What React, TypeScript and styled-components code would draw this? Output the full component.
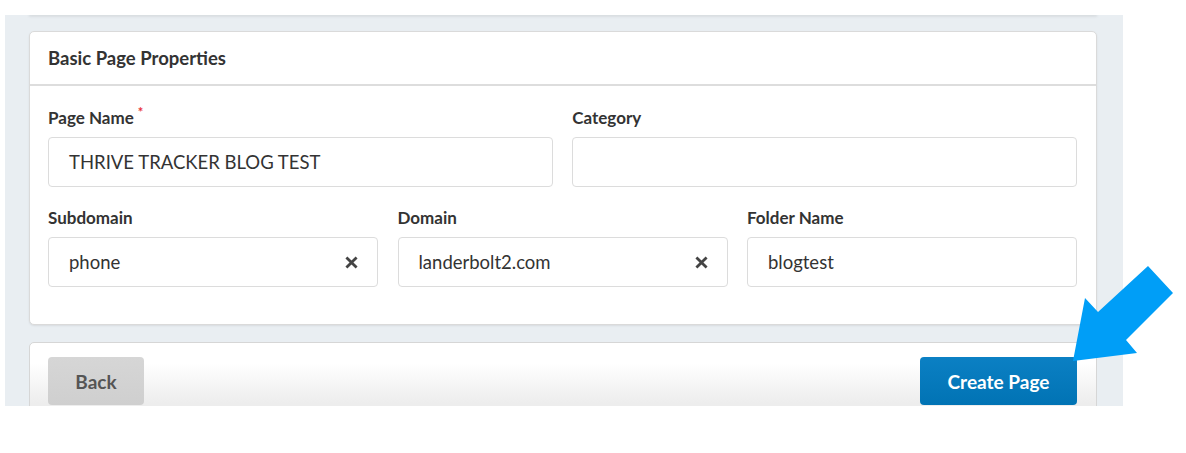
import React from 'react';
import styled, { createGlobalStyle } from 'styled-components';

const GlobalStyle = createGlobalStyle`
  html, body {
    margin: 0;
    padding: 0;
    background: #fff;
  }
  body {
    font-family: Lato, "Open Sans", sans-serif;
    color: #333;
  }
`;

const Page = styled.div`
  position: relative;
  width: 1186px;
  height: 453px;
  overflow: hidden;
`;

const Frame = styled.div`
  margin: 15px 0 0 5px;
  width: 1118px;
  height: 391px;
  box-sizing: border-box;
  padding: 0 26px 0 24px;
  background: #e9eef2;
  overflow: hidden;
`;

const PrevCardEdge = styled.div`
  height: 1px;
  margin-top: -1px;
  background: #fff;
  box-shadow: 0 1px 3px rgba(0, 0, 0, 0.22);
`;

const Card = styled.section`
  margin-top: 16px;
  background: #fff;
  border: 1px solid #dadada;
  border-radius: 5px;
  box-shadow: 0 1px 2px rgba(0, 0, 0, 0.08);
`;

const CardHeader = styled.header`
  display: flex;
  align-items: center;
  height: 51px;
  padding: 0 18px 1px;
  border-bottom: 2px solid #dddddd;
  font-size: 18.5px;
  font-weight: 700;
  color: #333;
`;

const CardBody = styled.div`
  display: flex;
  flex-direction: column;
  gap: 21px;
  padding: 22px 19px 37px 18px;
`;

const FieldRow = styled.div<{ $cols: number }>`
  display: grid;
  grid-template-columns: repeat(${(p) => p.$cols}, 1fr);
  column-gap: 19.5px;
`;

const Field = styled.div`
  display: flex;
  flex-direction: column;
  gap: 9px;
`;

const Label = styled.label`
  display: flex;
  align-items: flex-start;
  height: 20px;
  line-height: 20px;
  font-size: 17px;
  font-weight: 700;
  color: #333;
`;

const Required = styled.span`
  color: #e8333a;
  font-size: 13px;
  line-height: 10px;
  margin-left: 4px;
  margin-top: -1px;
`;

const InputBox = styled.div`
  display: flex;
  align-items: center;
  height: 50px;
  box-sizing: border-box;
  padding: 0 19px 0 20px;
  border: 1px solid #dcdcdc;
  border-radius: 4px;
  background: #fff;
  font-size: 18.5px;
  color: #333;
`;

const InputValue = styled.span`
  flex: 1;
  white-space: nowrap;
`;

const ClearIcon = styled.svg`
  width: 13px;
  height: 13px;
  fill: #444;
`;

const Footer = styled.div`
  display: flex;
  justify-content: space-between;
  align-items: flex-start;
  margin-top: 17px;
  height: 120px;
  padding: 14px 19px 0 18px;
  background: linear-gradient(#ffffff 0%, #ffffff 15%, #ededed 60px);
  border: 1px solid #d6d6d6;
  border-radius: 5px;
`;

const Button = styled.button<{ $primary?: boolean }>`
  height: 48px;
  padding: 0;
  width: ${(p) => (p.$primary ? '157px' : '96px')};
  border: none;
  border-radius: 4px;
  font-family: Lato, "Open Sans", sans-serif;
  font-size: 19px;
  font-weight: 700;
  cursor: pointer;
  color: ${(p) => (p.$primary ? '#fff' : '#555')};
  background: ${(p) =>
    p.$primary
      ? 'linear-gradient(#0b80c4, #0173b4)'
      : 'linear-gradient(#d6d6d6, #cfcfcf)'};
`;

const Annotation = styled.svg`
  position: absolute;
  left: 0;
  top: 0;
  pointer-events: none;
`;

const Clear = () => (
  <ClearIcon viewBox="0 0 12 12">
    <path d="M2.2 0.4 L6 4.2 L9.8 0.4 L11.6 2.2 L7.8 6 L11.6 9.8 L9.8 11.6 L6 7.8 L2.2 11.6 L0.4 9.8 L4.2 6 L0.4 2.2 Z" />
  </ClearIcon>
);

const App: React.FC = () => {
  return (
    <Page>
      <GlobalStyle />
      <Frame>
        <PrevCardEdge />
        <Card>
          <CardHeader>Basic Page Properties</CardHeader>
          <CardBody>
            <FieldRow $cols={2}>
              <Field>
                <Label>
                  Page Name<Required>*</Required>
                </Label>
                <InputBox>
                  <InputValue>THRIVE TRACKER BLOG TEST</InputValue>
                </InputBox>
              </Field>
              <Field>
                <Label>Category</Label>
                <InputBox />
              </Field>
            </FieldRow>
            <FieldRow $cols={3}>
              <Field>
                <Label>Subdomain</Label>
                <InputBox>
                  <InputValue>phone</InputValue>
                  <Clear />
                </InputBox>
              </Field>
              <Field>
                <Label>Domain</Label>
                <InputBox>
                  <InputValue>landerbolt2.com</InputValue>
                  <Clear />
                </InputBox>
              </Field>
              <Field>
                <Label>Folder Name</Label>
                <InputBox>
                  <InputValue>blogtest</InputValue>
                </InputBox>
              </Field>
            </FieldRow>
          </CardBody>
        </Card>
        <Footer>
          <Button>Back</Button>
          <Button $primary>Create Page</Button>
        </Footer>
      </Frame>
      <Annotation width="1186" height="453" viewBox="0 0 1186 453">
        <polygon
          points="1073,361 1085,298 1098,312 1148,266 1173,293 1126,340 1137,353"
          fill="#009ef7"
        />
      </Annotation>
    </Page>
  );
};

export default App;
